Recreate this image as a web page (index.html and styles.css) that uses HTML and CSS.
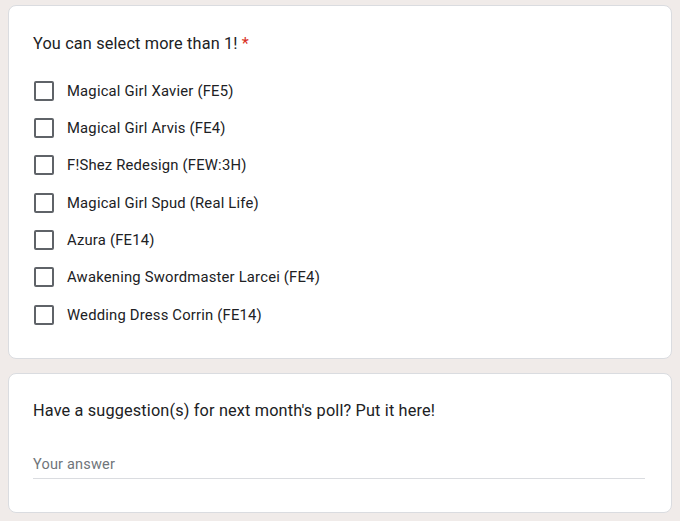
FILE: index.html
```html
<!DOCTYPE html>
<html>
<head>
<meta charset="utf-8">
<link rel="stylesheet" href="styles.css">
</head>
<body>
<div class="page">
  <div class="card">
    <div class="question">You can select more than 1! <span class="req">*</span></div>
    <div class="options">
      <label class="option"><span class="box"></span><span class="label">Magical Girl Xavier (FE5)</span></label>
      <label class="option"><span class="box"></span><span class="label">Magical Girl Arvis (FE4)</span></label>
      <label class="option"><span class="box"></span><span class="label">F!Shez Redesign (FEW:3H)</span></label>
      <label class="option"><span class="box"></span><span class="label">Magical Girl Spud (Real Life)</span></label>
      <label class="option"><span class="box"></span><span class="label">Azura (FE14)</span></label>
      <label class="option"><span class="box"></span><span class="label">Awakening Swordmaster Larcei (FE4)</span></label>
      <label class="option"><span class="box"></span><span class="label">Wedding Dress Corrin (FE14)</span></label>
    </div>
  </div>
  <div class="card card2">
    <div class="question">Have a suggestion(s) for next month's poll? Put it here!</div>
    <div class="answer"><span class="placeholder">Your answer</span></div>
  </div>
</div>
</body>
</html>
```
FILE: styles.css
```css
html, body {
  margin: 0;
  padding: 0;
  background: #f0ebe9;
  font-family: Roboto, "Liberation Sans", sans-serif;
  color: #202124;
}
.page {
  padding: 5px 8px 0 8px;
  display: flex;
  flex-direction: column;
  gap: 14px;
}
.card {
  background: #fff;
  border: 1px solid #dadce0;
  border-radius: 8px;
  padding: 26px 24px 25px 24px;
  box-sizing: border-box;
  width: 664px;
}
.question {
  font-size: 16.3px;
  line-height: 24px;
  letter-spacing: 0.15px;
}
.req {
  color: #d93025;
}
.options {
  margin-top: 16px;
  display: flex;
  flex-direction: column;
}
.option {
  display: flex;
  align-items: center;
  height: 37.33px;
}
.box {
  width: 16px;
  height: 16px;
  border: 2px solid #5f6368;
  border-radius: 2px;
  margin-left: 1px;
  flex: none;
}
.label {
  margin-left: 13px;
  font-size: 14.8px;
  letter-spacing: 0.2px;
}
.card2 {
  height: 140px;
  padding-top: 25px;
}
.answer {
  margin-top: 31px;
  width: 612px;
  border-bottom: 1px solid #dadce0;
  padding-bottom: 3px;
}
.placeholder {
  font-size: 14.5px;
  line-height: 20px;
  color: #70757a;
  letter-spacing: 0.2px;
}
```
